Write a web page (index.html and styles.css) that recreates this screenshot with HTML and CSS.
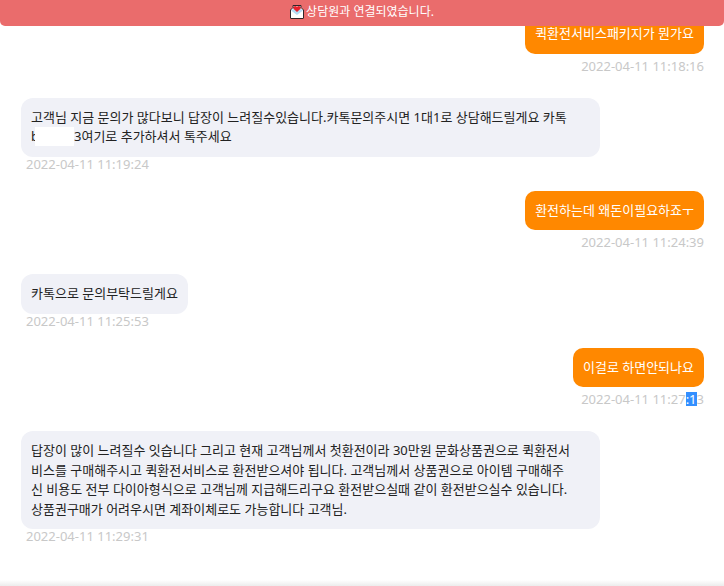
FILE: index.html
```html
<!DOCTYPE html>
<html lang="ko">
<head>
<meta charset="utf-8">
<meta name="viewport" content="width=device-width, initial-scale=1">
<title>상담</title>
<link rel="stylesheet" href="styles.css">
</head>
<body>
<header class="notice" role="status">
  <svg class="notice-icon" viewBox="0 0 14 14" aria-hidden="true">
    <path d="M.5 5 3 2.500V.5h8v2L13.500 5v8H.5z" fill="#fff"/>
    <path d="M1 5.500 3 4h8l2 1.500L7 10z" fill="#b5dcf5"/>
    <path d="M7 7 3.200 3.500C2.500 1.200 5.500.2 7 1.800 8.500.2 11.500 1.200 10.800 3.500z" fill="#e8202c"/>
    <path d="M.5 13V5L3 2.500V.5h8v2L13.500 5v8" fill="none" stroke="#30262a"/>
    <path d="M1 12.500h12" stroke="#fff"/>
    <path d="M.5 13.500h13" stroke="#30262a"/>
  </svg>
  <span>상담원과 연결되였습니다.</span>
</header>
<main>
  <ol class="chat">
    <li class="message mine">
      <p class="bubble">퀵환전서비스패키지가 뭔가요</p>
      <time class="time">2022-04-11 11:18:16</time>
    </li>
    <li class="message">
      <p class="bubble wide">고객님 지금 문의가 많다보니 답장이 느려질수있습니다.카톡문의주시면 1대1로 상담해드릴게요 카톡<br>b<span class="redacted"></span>3여기로 추가하셔서 톡주세요</p>
      <time class="time">2022-04-11 11:19:24</time>
    </li>
    <li class="message mine">
      <p class="bubble">환전하는데 왜돈이필요하죠ㅜ</p>
      <time class="time">2022-04-11 11:24:39</time>
    </li>
    <li class="message">
      <p class="bubble">카톡으로 문의부탁드릴게요</p>
      <time class="time">2022-04-11 11:25:53</time>
    </li>
    <li class="message mine">
      <p class="bubble">이걸로 하면안되나요</p>
      <time class="time">2022-04-11 11:27<span class="selected">:1</span>3</time>
    </li>
    <li class="message">
      <p class="bubble wide">답장이 많이 느려질수 잇습니다 그리고 현재 고객님께서 첫환전이라 30만원 문화상품권으로 퀵환전서<br>비스를 구매해주시고 퀵환전서비스로 환전받으셔야 됩니다. 고객님께서 상품권으로 아이템 구매해주<br>신 비용도 전부 다이아형식으로 고객님께 지급해드리구요 환전받으실때 같이 환전받으실수 있습니다.<br>상품권구매가 어려우시면 계좌이체로도 가능합니다 고객님.</p>
      <time class="time">2022-04-11 11:29:31</time>
    </li>
  </ol>
</main>
<div class="bottom-shade"></div>
</body>
</html>
```
FILE: styles.css
```css
* {
  box-sizing: border-box;
}

body {
  display: flex;
  flex-direction: column;
  min-height: 100vh;
  margin: 0;
  background: #fff;
  color: #222;
  font-family: "Noto Sans", "Noto Sans CJK KR", sans-serif;
  font-size: 13px;
  line-height: 1.5;
}

.notice {
  position: fixed;
  inset: 0 0 auto;
  display: flex;
  align-items: center;
  justify-content: center;
  gap: 2px;
  padding: 2px 0 4px;
  border-radius: 0 0 5px 5px;
  background: #ea6c6c;
  color: #fff;
  font-size: 12px;
  line-height: 20px;
}

.notice-icon {
  width: 14px;
  height: 14px;
}

main {
  flex: 1;
}

.chat {
  display: flex;
  flex-direction: column;
  margin: 0;
  padding: 14px 20px 0 21px;
  list-style: none;
}

.message {
  display: flex;
  flex-direction: column;
  align-items: flex-start;
  margin-bottom: 20px;
}

.mine {
  align-items: flex-end;
  gap: 5px;
  margin-bottom: 25px;
}

.bubble {
  max-width: 100%;
  margin: 0;
  padding: 10px;
  border-radius: 12px;
  background: #f0f1f7;
}

.wide {
  width: 80vw;
}

.mine .bubble {
  border-radius: 10px;
  background: #ff8800;
  color: #fff;
}

.time {
  padding-left: 5px;
  color: #c8c8c8;
  line-height: 14px;
}

.redacted {
  display: inline-block;
  width: 39px;
  height: 19px;
  margin: -5px 0 0 -4px;
  background: #fff;
  vertical-align: -5px;
}

.selected {
  display: inline-block;
  background: #338fff;
  color: #fff;
}

.bottom-shade {
  height: 6px;
  background: linear-gradient(#fff, #ececec);
}
```
